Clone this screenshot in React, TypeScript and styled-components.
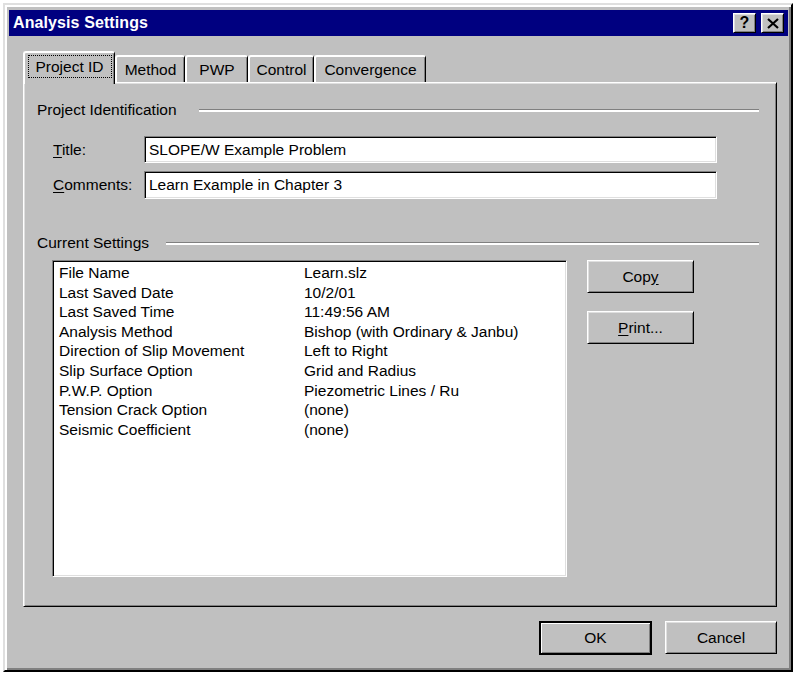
import { Fragment } from 'react'
import styled, { createGlobalStyle } from 'styled-components'

const GlobalStyle = createGlobalStyle`
	html, body {
		margin: 0;
		padding: 0;
		background: #fff;
	}
	body {
		font-family: "Liberation Sans", Arial, sans-serif;
		font-size: 15.5px;
		color: #000;
	}
`

const raised = `
	border: 1px solid;
	border-color: #fff #000 #000 #fff;
	box-shadow: inset 1px 1px #dfdfdf, inset -1px -1px #808080;
`

const sunken = `
	border: 1px solid;
	border-color: #808080 #fff #fff #808080;
	box-shadow: inset 1px 1px #000, inset -1px -1px #dfdfdf;
`

const Window = styled.div`
	box-sizing: border-box;
	width: 790px;
	height: 669px;
	margin: 3px 0 0 3px;
	background: #c0c0c0;
	border: 2px solid;
	border-color: #dfdfdf #000 #000 #dfdfdf;
	box-shadow: inset 2px 2px #fff, inset -2px -2px #808080;
	padding: 5px 3px 0 4px;
	display: flex;
	flex-direction: column;
`

const TitleBar = styled.div`
	height: 26px;
	background: #000080;
	color: #fff;
	display: flex;
	align-items: center;
	padding: 0 4px;
`

const Caption = styled.div`
	flex: 1;
	font-weight: bold;
	font-size: 16px;
	letter-spacing: 0.1px;
`

const CaptionButton = styled.div`
	box-sizing: border-box;
	width: 23px;
	height: 20px;
	margin-left: 5px;
	background: #c0c0c0;
	${raised}
	display: flex;
	align-items: center;
	justify-content: center;
	color: #000;
	font-weight: bold;
	font-size: 16px;
`

const Body = styled.div`
	flex: 1;
	padding: 15px 11px 0 14px;
	display: flex;
	flex-direction: column;
`

const TabStrip = styled.div`
	display: flex;
	align-items: flex-end;
	height: 31px;
`

const Tab = styled.div<{ $active?: boolean, $w: number }>`
	box-sizing: border-box;
	width: ${p => p.$w}px;
	height: ${p => (p.$active ? 33 : 27)}px;
	margin-bottom: ${p => (p.$active ? -2 : 0)}px;
	position: relative;
	z-index: ${p => (p.$active ? 2 : 0)};
	background: #c0c0c0;
	border-top: 2px solid #fff;
	border-left: 2px solid #fff;
	border-right: 1px solid #000;
	border-radius: 3px 3px 0 0;
	box-shadow: inset -1px 0 #808080;
	display: flex;
	align-items: ${p => (p.$active ? 'flex-start' : 'center')};
	justify-content: center;
	padding-top: ${p => (p.$active ? 2 : 1)}px;
`

const FocusLabel = styled.span`
	box-sizing: border-box;
	width: 84px;
	height: 23px;
	border: 1px dotted #000;
	display: flex;
	align-items: center;
	justify-content: center;
`

const Panel = styled.div`
	box-sizing: border-box;
	height: 525px;
	background: #c0c0c0;
	${raised}
	padding: 17px 17px 0 13px;
	display: flex;
	flex-direction: column;
`

const GroupHeader = styled.div<{ $gap: number }>`
	display: flex;
	align-items: center;
	height: 20px;
	gap: ${p => p.$gap}px;
`

const Etch = styled.div`
	flex: 1;
	height: 0;
	border-top: 1px solid #808080;
	border-bottom: 2px solid #fff;
`

const Fields = styled.div`
	display: flex;
	flex-direction: column;
	gap: 8px;
	margin-top: 16px;
	padding-left: 16px;
`

const FieldRow = styled.div`
	display: flex;
	align-items: center;
`

const FieldLabel = styled.div`
	width: 91px;
`

const TextBox = styled.div<{ $h: number }>`
	box-sizing: border-box;
	width: 573px;
	height: ${p => p.$h}px;
	background: #fff;
	${sunken}
	padding: 0 4px;
	display: flex;
	align-items: center;
`

const U = styled.span`
	text-decoration: underline;
	text-underline-offset: 2px;
`

const SettingsHeader = styled(GroupHeader)`
	margin-top: 34px;
`

const SettingsArea = styled.div`
	display: flex;
	margin-top: 7px;
	padding-left: 15px;
`

const ListBox = styled.div`
	box-sizing: border-box;
	width: 515px;
	height: 317px;
	background: #fff;
	${sunken}
	padding: 2px 6px;
	display: grid;
	grid-template-columns: 245px 1fr;
	grid-auto-rows: 19.6px;
	align-content: start;
	line-height: 19.6px;
`

const SideButtons = styled.div`
	display: flex;
	flex-direction: column;
	gap: 18px;
	margin-left: 20px;
`

const Button = styled.div<{ $w: number, $default?: boolean }>`
	box-sizing: border-box;
	width: ${p => p.$w}px;
	height: ${p => (p.$default ? 34 : 33)}px;
	background: #c0c0c0;
	${p => (p.$default
		? `border: 2px solid #000;
		box-shadow: inset 1px 1px #fff, inset -1px -1px #808080;`
		: raised)}
	display: flex;
	align-items: center;
	justify-content: center;
`

const Footer = styled.div`
	display: flex;
	justify-content: flex-end;
	gap: 13px;
	margin-top: 14px;
`

const rows: [string, string][] = [
	['File Name', 'Learn.slz'],
	['Last Saved Date', '10/2/01'],
	['Last Saved Time', '11:49:56 AM'],
	['Analysis Method', 'Bishop (with Ordinary & Janbu)'],
	['Direction of Slip Movement', 'Left to Right'],
	['Slip Surface Option', 'Grid and Radius'],
	['P.W.P. Option', 'Piezometric Lines / Ru'],
	['Tension Crack Option', '(none)'],
	['Seismic Coefficient', '(none)']
]

const CloseGlyph = () => (
	<svg width="12" height="11" viewBox="0 0 12 11">
		<path d="M1 1 L11 10 M11 1 L1 10" stroke="#000" strokeWidth="2.2" />
	</svg>
)

const App = () => (
	<>
		<GlobalStyle />
		<Window>
			<TitleBar>
				<Caption>Analysis Settings</Caption>
				<CaptionButton>?</CaptionButton>
				<CaptionButton><CloseGlyph /></CaptionButton>
			</TitleBar>
			<Body>
				<TabStrip>
					<Tab $active $w={92}><FocusLabel>Project ID</FocusLabel></Tab>
					<Tab $w={70}>Method</Tab>
					<Tab $w={63}>PWP</Tab>
					<Tab $w={66}>Control</Tab>
					<Tab $w={112}>Convergence</Tab>
				</TabStrip>
				<Panel>
					<GroupHeader $gap={22}>
						<span>Project Identification</span>
						<Etch />
					</GroupHeader>
					<Fields>
						<FieldRow>
							<FieldLabel><U>T</U>itle:</FieldLabel>
							<TextBox $h={27}>SLOPE/W Example Problem</TextBox>
						</FieldRow>
						<FieldRow>
							<FieldLabel><U>C</U>omments:</FieldLabel>
							<TextBox $h={28}>Learn Example in Chapter 3</TextBox>
						</FieldRow>
					</Fields>
					<SettingsHeader $gap={17}>
						<span>Current Settings</span>
						<Etch />
					</SettingsHeader>
					<SettingsArea>
						<ListBox>
							{rows.map(([name, value]) => (
								<Fragment key={name}>
									<span>{name}</span>
									<span>{value}</span>
								</Fragment>
							))}
						</ListBox>
						<SideButtons>
							<Button $w={107}>Cop<U>y</U></Button>
							<Button $w={107}><U>P</U>rint...</Button>
						</SideButtons>
					</SettingsArea>
				</Panel>
				<Footer>
					<Button $w={113} $default>OK</Button>
					<Button $w={112}>Cancel</Button>
				</Footer>
			</Body>
		</Window>
	</>
)

export default App
